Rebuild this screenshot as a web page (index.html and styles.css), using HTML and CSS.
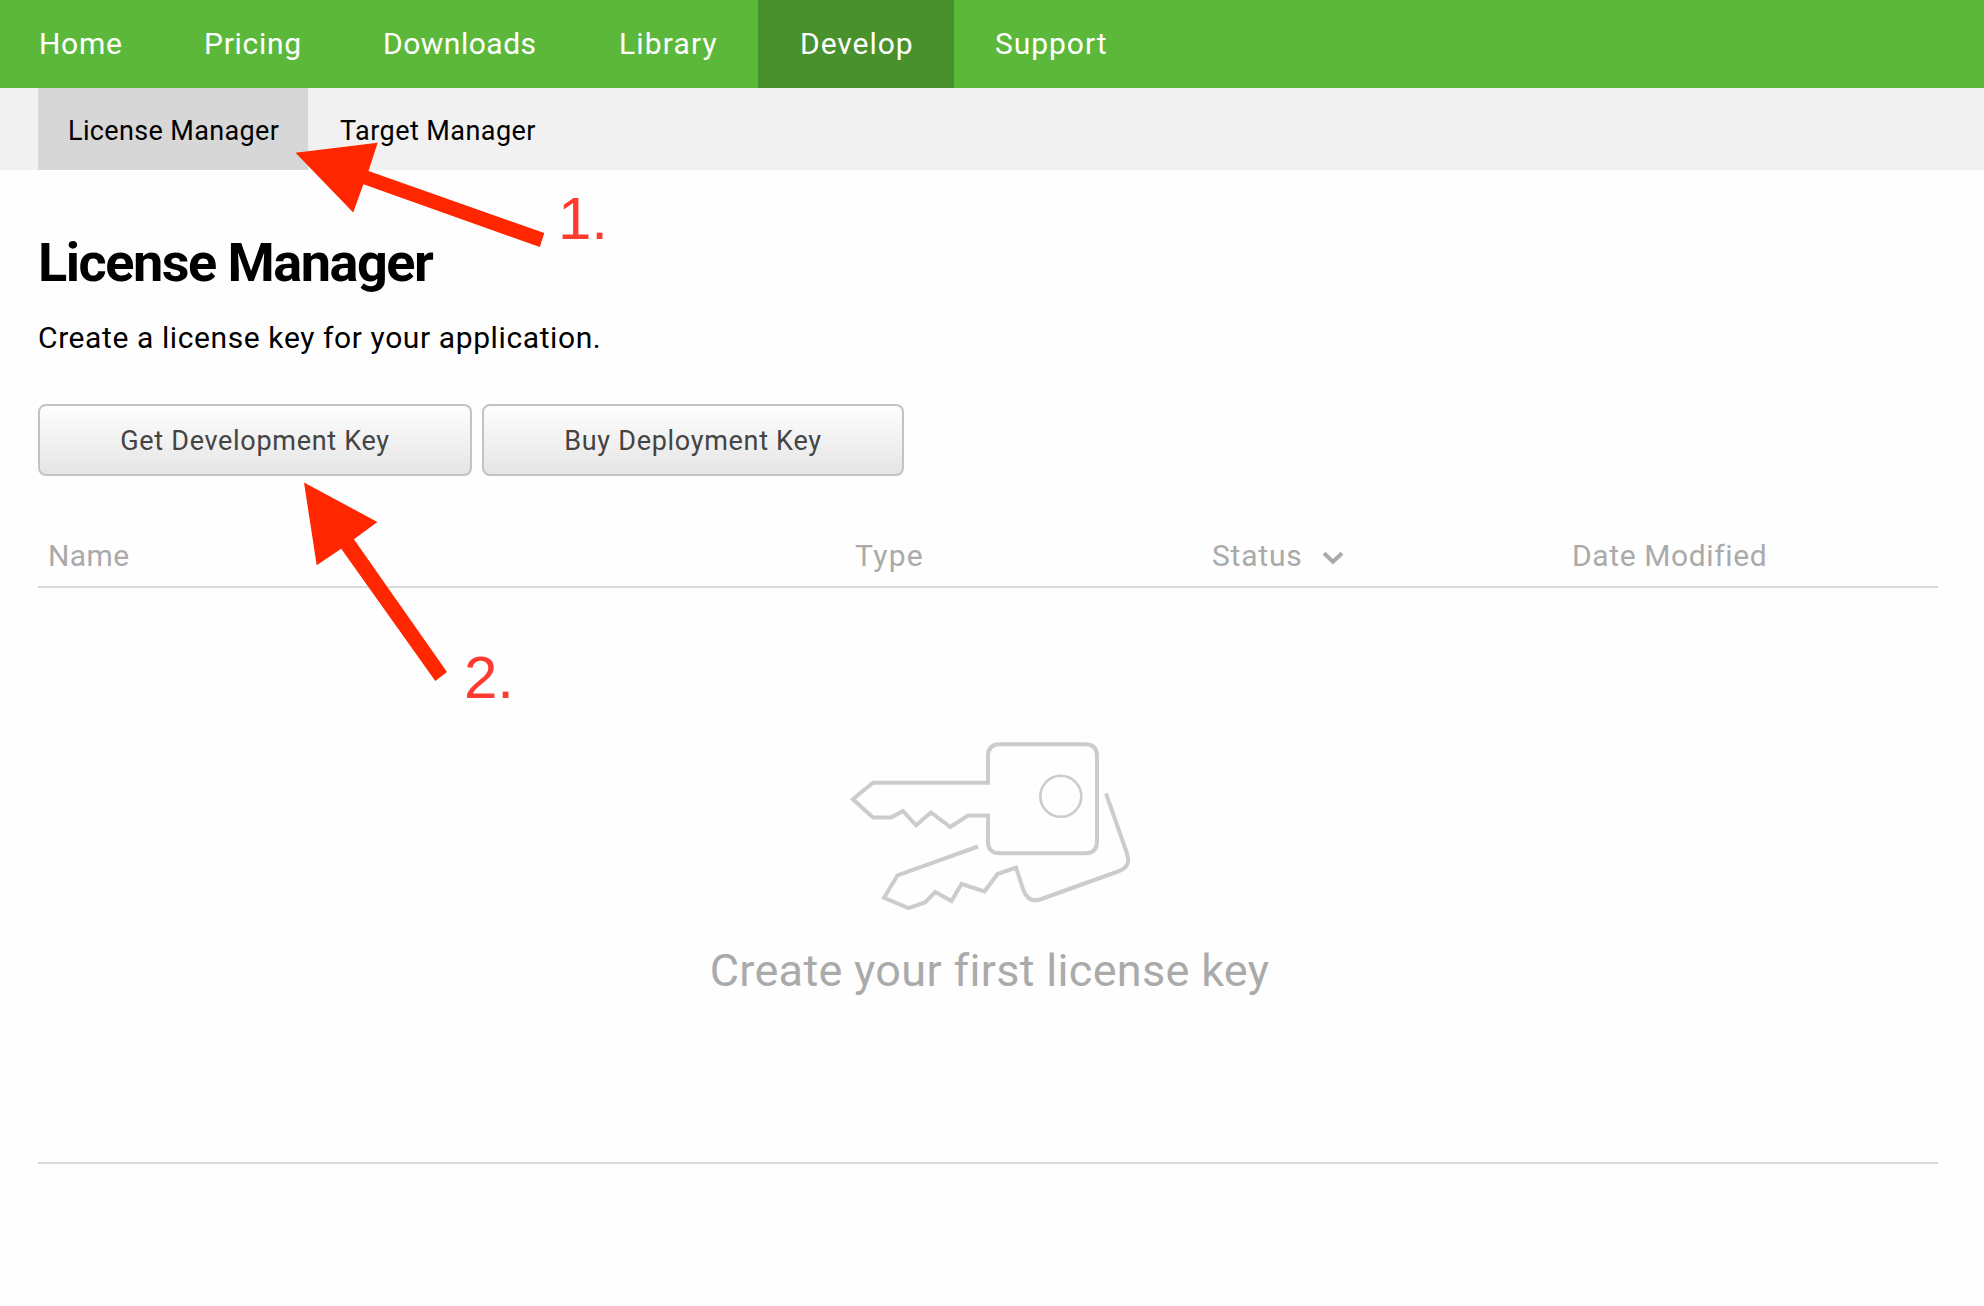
FILE: index.html
```
<!DOCTYPE html>
<html lang="en">
<head>
<meta charset="utf-8">
<title>License Manager</title>
<link rel="stylesheet" href="styles.css">
</head>
<body>
<nav class="main-nav">
  <a class="nav-item nav-home">Home</a>
  <a class="nav-item nav-pricing">Pricing</a>
  <a class="nav-item nav-downloads">Downloads</a>
  <a class="nav-item nav-library">Library</a>
  <a class="nav-item nav-develop active">Develop</a>
  <a class="nav-item nav-support">Support</a>
</nav>
<nav class="sub-nav">
  <a class="sub-item active">License Manager</a>
  <a class="sub-item">Target Manager</a>
</nav>
<main class="content">
  <h1 class="title">License Manager</h1>
  <p class="intro">Create a license key for your application.</p>
  <div class="actions">
    <button class="btn btn-dev">Get Development Key</button>
    <button class="btn btn-buy">Buy Deployment Key</button>
  </div>
  <div class="table-head">
    <span class="col-name">Name</span>
    <span class="col-type">Type</span>
    <span class="col-status">Status
      <svg class="chevron" width="22" height="14" viewBox="0 0 22 14"><path d="M2 1.200 11 9.800 20 1.200" fill="none" stroke="currentColor" stroke-width="4"/></svg>
    </span>
    <span class="col-date">Date Modified</span>
  </div>
  <section class="empty">
    <svg class="keys" width="320" height="200" viewBox="0 0 320 200" fill="none" stroke="#ccc" stroke-width="4">
      <path d="M158 62.8H43L22.8 79.3 43 97.5H61L73 91 86 105.3 101 92.5 120.3 107 138 95.5H158V121.500Q158 133.300 170 133.300H255Q267 133.300 267 121.500V36Q267 24.200 255 24.200H170Q158 24.200 158 36V64.800"/>
      <circle cx="230.800" cy="76.300" r="20.500" stroke-width="2.600"/>
      <path d="M148 126.500 67.500 155.300 54 177.800 78.500 188.200 95 182.500 105.300 172 121.500 181 131.500 164 154.500 171.300 167.500 154 186 147.500 193.500 170.500Q198.500 183 210 179.500L288 151.500Q301.500 147 297 133.500L276 73.500"/>
    </svg>
    <p class="empty-text">Create your first license key</p>
  </section>
</main>
<svg class="arrows" width="1984" height="1306" viewBox="0 0 1984 1306" fill="#ff2600">
  <path d="M295.500 152.700 377.700 142.700 368.500 171 544.300 233 539.800 247 363.400 184.300 353.200 212.500Z"/>
  <path d="M304 482.500 377.400 522 353.900 539.300 447 672 435.300 681 341.200 548.700 316.700 565.200Z"/>
</svg>
<span class="step step-one">1.</span>
<span class="step step-two">2.</span>
</body>
</html>
```
FILE: styles.css
```
* { box-sizing: border-box; }

body {
  position: relative;
  margin: 0;
  height: 1306px;
  overflow: hidden;
  background: #fefefe;
  color: #000;
  font-family: Roboto, "Liberation Sans", sans-serif;
  font-size: 30px;
}

h1, p { margin: 0; }

.main-nav {
  display: grid;
  grid-template-columns: 162px 179px 236px 181px 196px 1fr;
  height: 88px;
  background: #5cb83b;
  color: #fff;
}

.nav-item {
  padding-left: 42px;
  line-height: 88px;
  white-space: nowrap;
}

.nav-item.active { background: #48912d; }
.nav-home { padding-left: 39px; letter-spacing: 0.7px; }
.nav-pricing { letter-spacing: 0.7px; }
.nav-downloads { letter-spacing: 0.5px; }
.nav-library { letter-spacing: 1.15px; }
.nav-develop { letter-spacing: 0.95px; }
.nav-support { padding-left: 41px; letter-spacing: 0.95px; }

.sub-nav {
  display: flex;
  height: 82px;
  padding-left: 38px;
  background: #f1f1f1;
}

.sub-item {
  width: 270px;
  padding: 2px 0 0 30px;
  font-size: 27px;
  line-height: 82px;
  letter-spacing: 0.36px;
}

.sub-item + .sub-item { padding-left: 32px; letter-spacing: 0.44px; }
.sub-item.active { background: #d7d7d7; }

.content { padding: 61px 46px 0 38px; }

.title {
  font-size: 54px;
  line-height: 64px;
  letter-spacing: -1.48px;
}

.intro {
  margin-top: 25px;
  line-height: 36px;
  letter-spacing: 0.6px;
}

.actions {
  display: flex;
  gap: 10px;
  margin-top: 48px;
}

.btn {
  height: 72px;
  padding: 2px 0 0;
  border: 2px solid #c3c3c3;
  border-radius: 8px;
  background: linear-gradient(#fefefe, #e5e5e5);
  color: #444;
  font: 27px Roboto, sans-serif;
}

.btn-dev { width: 434px; letter-spacing: 0.69px; }
.btn-buy { width: 422px; letter-spacing: 0.7px; }

.table-head {
  display: grid;
  grid-template-columns: 807px 357px 360px 1fr;
  height: 112px;
  padding: 50px 0 0 10px;
  border-bottom: 2px solid #d9d9d9;
  color: #aaa;
  line-height: 60px;
}

.col-name { letter-spacing: 0.4px; }
.col-type { letter-spacing: 1.3px; }
.col-status { letter-spacing: 0.8px; }
.col-date { letter-spacing: 0.62px; }
.chevron { margin-left: 11px; }

.empty {
  display: flex;
  flex-direction: column;
  align-items: center;
  height: 576px;
  padding-top: 132px;
  border-bottom: 2px solid #d9d9d9;
}

.keys { display: block; margin-left: 4px; }

.empty-text {
  margin: 21px 0 0 3px;
  color: #aaa;
  font-size: 45px;
  line-height: 60px;
  letter-spacing: 0.31px;
}

.arrows {
  position: absolute;
  top: 0;
  left: 0;
}

.step {
  position: absolute;
  color: #ff3b30;
  font: 60px/60px "Liberation Sans", Arial, sans-serif;
}

.step-one { left: 558px; top: 189px; }
.step-two { left: 464px; top: 648px; }
```
